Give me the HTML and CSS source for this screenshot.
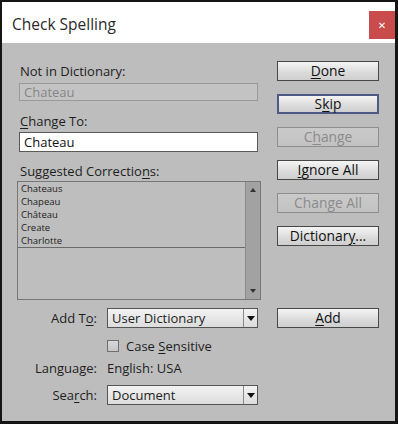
FILE: index.html
```html
<!DOCTYPE html>
<html>
<head>
<meta charset="utf-8">
<link rel="stylesheet" href="styles.css">
</head>
<body>
<div class="window">
  <div class="titlebar">
    <span class="title">Check Spelling</span>
    <span class="close">&#x2715;</span>
  </div>
  <div class="content">
    <div class="top">
      <div class="left">
        <div class="label l1">Not in Dictionary:</div>
        <div class="field disabled">Chateau</div>
        <div class="label l2"><u>C</u>hange To:</div>
        <div class="field active">Chateau</div>
        <div class="label l3">Suggested Correctio<u>n</u>s:</div>
        <div class="list">
          <div class="items">
            <div class="item">Chateaus</div>
            <div class="item">Chapeau</div>
            <div class="item">Château</div>
            <div class="item">Create</div>
            <div class="item">Charlotte</div>
          </div>
          <div class="scrollbar">
            <span class="arrow up"></span>
            <span class="arrow down"></span>
          </div>
        </div>
      </div>
      <div class="right">
        <div class="btn"><u>D</u>one</div>
        <div class="btn focus">S<u>k</u>ip</div>
        <div class="btn off">C<u>h</u>ange</div>
        <div class="btn"><u>I</u>gnore All</div>
        <div class="btn off">Chan<u>g</u>e All</div>
        <div class="btn">Dictionar<u>y</u>...</div>
      </div>
    </div>
    <div class="bottom">
      <div class="rlabel r1">Add T<u>o</u>:</div>
      <div class="select r1"><span class="val">User Dictionary</span><span class="drop"></span></div>
      <div class="btn add r1"><u>A</u>dd</div>

      <div class="check r2"><span class="box"></span><span>Case <u>S</u>ensitive</span></div>

      <div class="rlabel r3">Language:</div>
      <div class="plain r3">English: USA</div>

      <div class="rlabel r4">Sea<u>r</u>ch:</div>
      <div class="select r4"><span class="val">Document</span><span class="drop"></span></div>
    </div>
  </div>
</div>
</body>
</html>
```
FILE: styles.css
```css
* { box-sizing: border-box; }
html, body { margin: 0; padding: 0; }
body {
  width: 398px;
  height: 424px;
  background: #ffffff;
  font-family: "Open Sans", "Noto Sans", sans-serif;
  font-size: 13px;
  color: #1e1e1e;
}
u { text-decoration: underline; text-underline-offset: 2px; }

.window {
  width: 398px;
  height: 424px;
  border: 2px solid #151515;
  border-right-width: 3px;
  border-bottom-width: 3px;
  display: flex;
  flex-direction: column;
  background: #bdbdbd;
}

.titlebar {
  height: 41px;
  background: #ffffff;
  display: flex;
  align-items: flex-start;
  justify-content: space-between;
  flex-shrink: 0;
}
.title {
  font-family: "Open Sans", sans-serif;
  font-size: 15.5px;
  color: #2a2a2a;
  margin-left: 10px;
  margin-top: 11px;
  line-height: 22px;
}
.close {
  width: 26px;
  height: 28px;
  margin-top: 9px;
  background: #c94b4b;
  color: #ffffff;
  font-family: "DejaVu Sans", sans-serif;
  font-size: 10px;
  font-weight: bold;
  display: flex;
  align-items: center;
  justify-content: center;
}

.content {
  flex: 1;
  padding-left: 15px;
  display: flex;
  flex-direction: column;
}

.top {
  display: flex;
  gap: 16px;
}
.left {
  width: 244px;
  display: flex;
  flex-direction: column;
}
.label {
  height: 16px;
  line-height: 16px;
  margin-left: 3px;
  white-space: nowrap;
}
.l1 { margin-top: 20px; }
.l2 { margin-top: 12px; }
.l3 { margin-top: 11px; }

.field {
  margin-left: 2px;
  width: 239px;
  padding-left: 4px;
  white-space: nowrap;
}
.field.disabled {
  margin-top: 4px;
  height: 18px;
  line-height: 16px;
  background: #c3c3c3;
  border: 1px solid #9a9a9a;
  color: #868686;
}
.field.active {
  margin-top: 3px;
  height: 20px;
  line-height: 18px;
  background: #ffffff;
  border: 1px solid #5a5a5a;
  color: #111;
}

.list {
  margin-top: 2px;
  height: 119px;
  border: 1px solid #777;
  display: flex;
  background: #bebebe;
}
.items {
  flex: 1;
  align-self: flex-start;
  border-bottom: 1px solid #6a6a6a;
  padding-left: 3px;
}
.item {
  height: 13px;
  line-height: 13px;
  font-size: 9.5px;
  color: #222;
}
.scrollbar {
  width: 15px;
  background: #a2a2a2;
  border-left: 1px solid #8a8a8a;
  display: flex;
  flex-direction: column;
  justify-content: space-between;
  align-items: center;
  padding: 6px 0 6px;
}
.arrow {
  width: 0;
  height: 0;
  border-left: 3.5px solid transparent;
  border-right: 3.5px solid transparent;
}
.arrow.up { border-bottom: 4px solid #333; }
.arrow.down { border-top: 4px solid #333; }

.right {
  width: 102px;
  padding-top: 18px;
  display: flex;
  flex-direction: column;
  gap: 13px;
}
.btn {
  height: 20px;
  border: 1px solid #474747;
  background: linear-gradient(#f5f5f5, #dadada 60%, #cfcfcf);
  text-align: center;
  line-height: 18px;
  font-size: 13.8px;
  color: #111;
  white-space: nowrap;
}
.btn.focus {
  border: 2px solid #4d5884;
  line-height: 16px;
}
.btn.off {
  border-color: #8e8e8e;
  background: linear-gradient(#cacaca, #c2c2c2);
  color: #8b8b8b;
}

.bottom {
  display: grid;
  grid-template-columns: 90px 170px 102px;
  align-items: center;
}
.r1 { grid-row: 1; margin-top: 8px; }
.r2 { grid-row: 2; margin-top: 10px; }
.r3 { grid-row: 3; margin-top: 6px; }
.r4 { grid-row: 4; margin-top: 9px; }
.rlabel {
  grid-column: 1;
  text-align: right;
  padding-right: 10px;
  height: 16px;
  line-height: 16px;
  white-space: nowrap;
}
.select {
  grid-column: 2;
  width: 151px;
  height: 20px;
  border: 1px solid #555;
  background: linear-gradient(#f3f3f3, #dcdcdc);
  display: flex;
  align-items: stretch;
}
.select .val {
  flex: 1;
  padding-left: 4px;
  line-height: 18px;
  white-space: nowrap;
}
.select .drop {
  width: 14px;
  border-left: 1px solid #8a8a8a;
  position: relative;
}
.select .drop::after {
  content: "";
  position: absolute;
  left: 3px;
  top: 7px;
  border-left: 4px solid transparent;
  border-right: 4px solid transparent;
  border-top: 5px solid #111;
}
.btn.add { grid-column: 3; }
.check {
  grid-column: 2;
  display: flex;
  align-items: center;
  gap: 7px;
  height: 16px;
  line-height: 16px;
  white-space: nowrap;
}
.box {
  width: 12px;
  height: 12px;
  border: 1px solid #6e6e6e;
  background: linear-gradient(#d8d8d8, #c6c6c6);
}
.plain {
  grid-column: 2;
  height: 16px;
  line-height: 16px;
  white-space: nowrap;
}
```
